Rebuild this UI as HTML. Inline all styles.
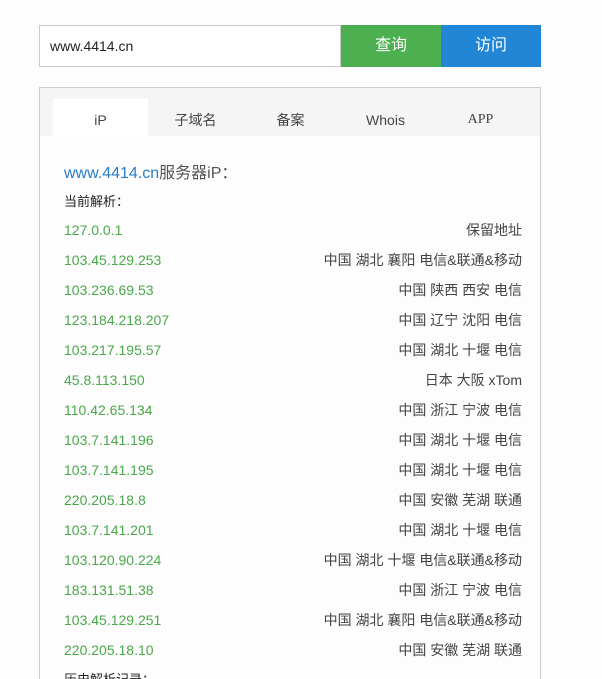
<!DOCTYPE html>
<html><head><meta charset="utf-8"><style>
html,body{margin:0;overflow:hidden;height:679px}
body{background:#fdfdfd;font-family:"Liberation Sans","Noto Sans CJK SC",sans-serif;width:602px;position:relative}
.inp{position:absolute;left:39px;top:25px;width:290px;height:40px;border:1px solid #ccc;background:#fff;font-size:14px;line-height:40px;padding-left:10px;color:#222}
.b{position:absolute;top:25px;height:42px;width:100px;color:#fff;font-size:16px;text-align:center;line-height:42px}
.panel{position:absolute;left:39px;top:87px;width:500px;height:620px;border:1px solid #ccc;background:#fdfdfd}
.tabs{position:absolute;left:0;top:0;width:500px;height:48px;background:#f5f5f5}
.tab{position:absolute;top:11px;width:95px;height:37px;line-height:42px;text-align:center;font-size:14px;color:#444}
.title{position:absolute;left:24px;top:71px;font-size:16px;color:#555}
.sub{position:absolute;left:24px;top:103px;font-size:13px;color:#222}
.row{position:absolute;left:24px;width:458px;font-size:14px;height:20px;line-height:20px}
.row .l{color:#4aa84a;float:left}.row .r{color:#444;float:right}
</style></head><body>
<div class="inp">www.4414.cn</div>
<div class="b" style="left:341px;background:#4caf50">查询</div>
<div class="b" style="left:441px;background:#2286d6">访问</div>
<div class="panel">
<div class="tabs">
<div class="tab" style="left:13px;background:#fff">iP</div>
<div class="tab" style="left:108px">子域名</div>
<div class="tab" style="left:203px">备案</div>
<div class="tab" style="left:298px">Whois</div>
<div class="tab" style="left:393px;font-family:'Liberation Serif',serif">APP</div>
</div>
<div class="title"><span style="color:#2a7cc7">www.4414.cn</span>服务器iP：</div>
<div class="sub">当前解析：</div>
<div class="row" style="top:132px"><span class="l">127.0.0.1</span><span class="r">保留地址</span></div>
<div class="row" style="top:162px"><span class="l">103.45.129.253</span><span class="r">中国 湖北 襄阳 电信&amp;联通&amp;移动</span></div>
<div class="row" style="top:192px"><span class="l">103.236.69.53</span><span class="r">中国 陕西 西安 电信</span></div>
<div class="row" style="top:222px"><span class="l">123.184.218.207</span><span class="r">中国 辽宁 沈阳 电信</span></div>
<div class="row" style="top:252px"><span class="l">103.217.195.57</span><span class="r">中国 湖北 十堰 电信</span></div>
<div class="row" style="top:282px"><span class="l">45.8.113.150</span><span class="r">日本 大阪 xTom</span></div>
<div class="row" style="top:312px"><span class="l">110.42.65.134</span><span class="r">中国 浙江 宁波 电信</span></div>
<div class="row" style="top:342px"><span class="l">103.7.141.196</span><span class="r">中国 湖北 十堰 电信</span></div>
<div class="row" style="top:372px"><span class="l">103.7.141.195</span><span class="r">中国 湖北 十堰 电信</span></div>
<div class="row" style="top:402px"><span class="l">220.205.18.8</span><span class="r">中国 安徽 芜湖 联通</span></div>
<div class="row" style="top:432px"><span class="l">103.7.141.201</span><span class="r">中国 湖北 十堰 电信</span></div>
<div class="row" style="top:462px"><span class="l">103.120.90.224</span><span class="r">中国 湖北 十堰 电信&amp;联通&amp;移动</span></div>
<div class="row" style="top:492px"><span class="l">183.131.51.38</span><span class="r">中国 浙江 宁波 电信</span></div>
<div class="row" style="top:522px"><span class="l">103.45.129.251</span><span class="r">中国 湖北 襄阳 电信&amp;联通&amp;移动</span></div>
<div class="row" style="top:552px"><span class="l">220.205.18.10</span><span class="r">中国 安徽 芜湖 联通</span></div>
<div class="sub" style="top:581px">历史解析记录：</div>
</div>
</body></html>
